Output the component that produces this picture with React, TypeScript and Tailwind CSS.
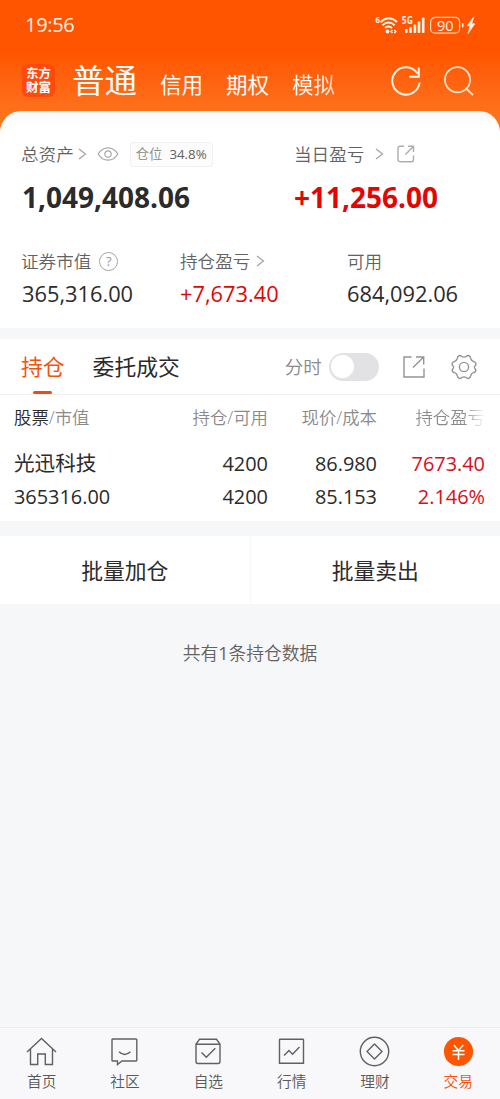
import React from "react";

type IconProps = { className?: string };

const Chevron = ({ className = "" }: IconProps) => (
  <svg viewBox="0 0 9 14" className={`h-[14px] w-[9px] shrink-0 ${className}`} fill="none" stroke="#a6a6a6" strokeWidth="1.3">
    <path d="M1 2l6.500 5L1 12" />
  </svg>
);

const Eye = ({ className = "" }: IconProps) => (
  <svg viewBox="0 0 22 16" className={`h-[16px] w-[22px] shrink-0 ${className}`} fill="none" stroke="#a6a6a6" strokeWidth="1.2">
    <path d="M1.200 8C3.500 4 7 1.800 11 1.800S18.500 4 20.800 8C18.500 12 15 14.200 11 14.200S3.500 12 1.200 8z" />
    <circle cx="11" cy="8" r="3.200" />
  </svg>
);

const ShareSmall = ({ className = "" }: IconProps) => (
  <svg viewBox="0 0 18 18" className={`h-[18px] w-[18px] shrink-0 ${className}`} fill="none" stroke="#adadad" strokeWidth="1.4">
    <path d="M7 1.200H3a2 2 0 0 0-2 2v11.500a2 2 0 0 0 2 2h11.500a2 2 0 0 0 2-2V10.500" />
    <path d="M11 1.200h5.500V7M16.300 1.400L8.500 9.500" />
  </svg>
);

const ShareLarge = ({ className = "" }: IconProps) => (
  <svg viewBox="0 0 24 24" className={`h-[24px] w-[24px] shrink-0 ${className}`} fill="none" stroke="#949494" strokeWidth="1.4">
    <path d="M9.500 2H2v20h20V13.500" />
    <path d="M14 2h7.700v7.500M21.500 2.200L11 12.500" />
  </svg>
);

const Gear = ({ className = "" }: IconProps) => (
  <svg viewBox="0 0 26 26" className={`h-[26px] w-[26px] shrink-0 ${className}`} fill="none" stroke="#949494" strokeWidth="1.4" strokeLinejoin="round">
    <path d="M8.600 1.500C10 1.200 10.800 3.100 13 3.100S16 1.200 17.400 1.500C19.500 2.200 19.600 3 20 5C20.500 7.200 22 7 24 8.200C25.300 9.300 25.200 10.500 24 12C22.900 13.200 22.900 13.300 24 14.500C25.200 16 25.300 16.800 24 17.900C22 19.100 20.500 18.900 20 21C19.600 23.100 19.500 23.900 17.400 24.500C16 24.800 15.200 22.900 13 22.900S10 24.800 8.600 24.500C6.500 23.900 6.400 23.100 6 21C5.500 18.900 4 19.100 2 17.900C.7 16.800 .8 16 2 14.500C3.100 13.300 3.100 13.200 2 12C.8 10.500 .7 9.300 2 8.200C4 7 5.500 7.200 6 5C6.400 3 6.500 2.200 8.600 1.500z" />
    <circle cx="13" cy="13" r="4.600" />
  </svg>
);

const StatusIcons = () => (
  <svg viewBox="0 0 102 22" className="h-[22px] w-[102px]" fill="none" stroke="#fff3e6">
    <text x="0.500" y="9" fontSize="9" fontWeight="700" fill="#fff3e6" stroke="none" fontFamily="Open Sans, sans-serif" textLength="4.500" lengthAdjust="spacingAndGlyphs">6</text>
    <g strokeWidth="1.900">
      <path d="M5.500 8.200Q13.500 .5 22 8" />
      <path d="M7.500 11.300Q13.500 5.800 19.700 11.200" />
      <path d="M9.800 14Q13.500 11 17 14" />
    </g>
    <circle cx="12.500" cy="17.500" r="1.900" fill="#fff3e6" stroke="none" />
    <path d="M17.500 16l-1.500 1.500 1.500 1.500M19.300 16l1.500 1.500-1.500 1.500" strokeWidth="1.500" />
    <text x="26.800" y="10" fontSize="10.500" fontWeight="700" fill="#fff3e6" stroke="none" fontFamily="Open Sans, sans-serif" textLength="11" lengthAdjust="spacingAndGlyphs">5G</text>
    <g fill="#fff3e6" stroke="none">
      <rect x="30" y="15" width="2.600" height="4" rx=".8" />
      <rect x="34.200" y="13" width="2.600" height="6" rx=".8" />
      <rect x="38.600" y="10.500" width="2.600" height="8.500" rx=".8" />
      <rect x="42.700" y="7.500" width="2.600" height="11.500" rx=".8" />
      <rect x="46.900" y="3.500" width="2.600" height="15.500" rx=".8" />
    </g>
    <rect x="55.600" y="3.400" width="29" height="15.800" rx="4.500" strokeWidth="1.200" stroke="#ffd9b8" />
    <path d="M87.700 9.300v4" strokeWidth="1.600" />
    <text x="70.300" y="16.600" fontSize="14.500" fontWeight="500" fill="#fff3e6" stroke="none" textAnchor="middle" fontFamily="Open Sans, sans-serif">90</text>
    <path d="M98.800 2.800L92 11.800h3L93 19.800 99.800 9.800h-3z" fill="#fff3e6" stroke="#fff3e6" strokeWidth="0.600" />
  </svg>
);

const navIcons: Record<string, React.ReactNode> = {
  首页: <path d="M1 16L15.500 2.500 30 16M4.500 13v15.500h7.200V18h7.600v10.500h7.200V13" />,
  社区: <path d="M4 3h23a.8.8 0 0 1 .8.800v20.400a.8.800 0 0 1-.8.800H13l-4.500 3.500V25H3.800a.8.800 0 0 1-.8-.8V3.800A.8.800 0 0 1 4 3zM10 15.800q5.500 5.400 11.500 0" />,
  自选: <path d="M3 8.200v17.300a2 2 0 0 0 2 2h20a2 2 0 0 0 2-2V8.200zM3 8.200L6.500 3.300h17L27 8.200M8.500 16.500l4.800 4.800 9-9" />,
  行情: <path d="M4 3.200h23a.5.500 0 0 1 .5.500v23.500h-24V3.700a.5.500 0 0 1 .5-.5zM8 19.500l5-5 3.500 3.700 7-7.200" />,
  理财: (
    <>
      <circle cx="15.500" cy="15.500" r="14.200" />
      <path d="M15.500 8L23 15.500 15.500 23 8 15.500z" strokeLinejoin="round" />
    </>
  ),
  交易: (
    <>
      <circle cx="15.500" cy="15.500" r="14.600" fill="#ff5500" stroke="none" />
      <path d="M10.800 9l4.700 5.500L20.200 9M9.500 14.700h12M9.500 18.500h12M15.500 14.500v9.300" stroke="#fff" strokeWidth="1.500" />
    </>
  ),
};

const rows = [
  ["光迅科技", "4200", "86.980", "7673.40"],
  ["365316.00", "4200", "85.153", "2.146%"],
];

const labelText = "text-[17.6px] font-[350] leading-6 text-[#626262]";

export default function App() {
  return (
    <div className="flex h-[1099px] w-[500px] flex-col overflow-hidden bg-[#f6f7f9] font-['Open_Sans','Noto_Sans_CJK_SC',sans-serif] text-[#2b2b2b] whitespace-nowrap">
      <header className="h-[136px] shrink-0 bg-linear-to-b from-[#ff5500] from-38% to-[#ff721c] to-85%">
        <div className="flex h-[50px] items-center justify-between pl-[25px] pr-[23px]">
          <span className="text-[20px] font-medium tracking-[-0.300px] text-[#fff3e6]">19:56</span>
          <StatusIcons />
        </div>
        <div className="flex h-[61px] items-center pl-[22px] text-[21.500px] leading-8 text-white">
          <div className="flex h-[33px] w-[33px] flex-col items-center justify-center rounded-[6px] bg-[#ff4a0d] text-[12.500px] font-bold leading-[14px]">
            <span>东方</span>
            <span>财富</span>
          </div>
          <h1 className="ml-[17px] text-[32.500px] leading-10">普通</h1>
          <span className="ml-[23px] mt-[9px]">信用</span>
          <span className="ml-[23px] mt-[9px]">期权</span>
          <span className="ml-[23px] mt-[9px] bg-linear-to-r from-white from-75% to-[#ffc7a3] bg-clip-text text-transparent">模拟</span>
          <svg viewBox="0 0 30 30" className="ml-[56px] h-[30px] w-[30px]" fill="none" stroke="#fff3e6" strokeWidth="2">
            <path d="M28.600 16.500A13.700 13.700 0 1 1 26.500 7.500M27.800 1.500v9.300h-9.500" />
          </svg>
          <svg viewBox="0 0 30 30" className="ml-[23px] h-[30px] w-[30px]" fill="none" stroke="#ffe4cc" strokeWidth="1.800">
            <circle cx="13.500" cy="13.700" r="12.600" />
            <path d="M21.500 22l7.500 7" />
          </svg>
        </div>
      </header>

      <section className="h-[217px] -mt-[25px] shrink-0 rounded-t-[21px] bg-linear-to-b from-[#f8f8f9] to-white to-[16px] pl-[22px] pt-[30px]">
        <div className="flex h-[26px] items-center">
          <div className="flex w-[272px] items-center">
            <span className={`${labelText} -ml-px`}>总资产</span>
            <Chevron className="ml-[4px]" />
            <Eye className="ml-[10px]" />
            <div className="ml-[11px] flex h-[25px] w-[83px] items-center rounded-[3px] border border-[#f1f1f1] bg-[#fcfcfc] pl-[5px] pt-px text-[13.300px] text-[#626262]">
              <span className="font-[350] text-[#8a8a8a]">仓位</span>
              <span className="ml-[7px]">34.8%</span>
            </div>
          </div>
          <span className={labelText}>当日盈亏</span>
          <Chevron className="ml-[11px]" />
          <ShareSmall className="ml-[13px]" />
        </div>
        <div className="mt-[12px] flex h-[36px] items-center text-[28px] font-bold leading-9">
          <span className="w-[272px]">1,049,408.06</span>
          <span className="text-[#e10602]">+11,256.00</span>
        </div>
        <div className="mt-[34px] flex h-[24px] items-center">
          <div className="flex w-[158px] items-center">
            <span className={`${labelText} -ml-px`}>证券市值</span>
            <span className="ml-[8px] flex h-[19px] w-[19px] items-center justify-center rounded-full border border-[#a6a6a6] text-[13px] leading-4 text-[#999]">?</span>
          </div>
          <div className="flex w-[167px] items-center">
            <span className={labelText}>持仓盈亏</span>
            <Chevron className="ml-[6px]" />
          </div>
          <span className={labelText}>可用</span>
        </div>
        <div className="mt-[6px] flex text-[21.800px] leading-[30px]">
          <span className="w-[158px]">365,316.00</span>
          <span className="w-[167px] text-[#e10602]">+7,673.40</span>
          <span>684,092.06</span>
        </div>
      </section>

      <section className="mt-[11px] h-[182px] shrink-0 bg-white">
        <div className="flex h-[56px] items-center border-b border-[#f0f0f0] pl-[21px] text-[21.800px] leading-8">
          <div className="relative pt-px text-[#f4510b]">
            持仓
            <span className="absolute -bottom-[11px] left-[12px] h-[3px] w-[19px] rounded-full bg-[#e9500f]" />
          </div>
          <span className="ml-[28px] pt-px">委托成交</span>
          <span className="ml-[105px] pt-px text-[18.500px] font-[350] text-[#8a8a8a]">分时</span>
          <span className="ml-[7px] flex h-[28px] w-[50px] items-center rounded-full bg-[#e2e2e4] pl-[2px]">
            <span className="h-[23px] w-[23px] rounded-full bg-white" />
          </span>
          <ShareLarge className="ml-[23px]" />
          <Gear className="ml-[25px]" />
        </div>
        <div className="flex h-[44px] items-center pl-[14px] text-[17.400px] font-[350] leading-6 text-[#8a8a8a]">
          <span className="w-[134px]">
            <span className="text-[#2b2b2b]">股票</span>/市值
          </span>
          <span className="w-[120px] text-right">持仓/可用</span>
          <span className="w-[109px] text-right">现价/成本</span>
          <span className="flex w-[108px] justify-end">
            <span className="bg-linear-to-r from-[#8a8a8a] from-70% to-[#f4f4f4] to-98% bg-clip-text text-transparent">持仓盈亏</span>
          </span>
        </div>
        <div className="mt-[8px]">
          {rows.map((row) => (
            <div key={row[0]} className="flex h-[33px] items-center pl-[14px] text-[19.900px] leading-[33px]">
              <span className="w-[134px]">{row[0] === "光迅科技" ? <span className="text-[20.600px]">{row[0]}</span> : row[0]}</span>
              <span className="w-[120px] text-right">{row[1]}</span>
              <span className="w-[109px] text-right">{row[2]}</span>
              <span className="w-[108px] text-right text-[#d90d1b]">{row[3]}</span>
            </div>
          ))}
        </div>
      </section>

      <section className="mt-[15px] flex h-[68px] shrink-0 bg-white text-[21.800px]">
        <button className="flex flex-1 items-center justify-center border-r border-[#f7f7f8] pt-[3px]">批量加仓</button>
        <button className="flex flex-1 items-center justify-center pt-[3px]">批量卖出</button>
      </section>

      <p className="mt-[37px] text-center text-[17.800px] font-[350] leading-6 text-[#626262]">
        共有<span className="font-normal">1</span>条持仓数据
      </p>

      <nav className="mt-auto flex h-[72px] shrink-0 border-t border-[#ececee] bg-[#f8f8fa]">
        {Object.entries(navIcons).map(([name, icon]) => (
          <div key={name} className={`flex flex-1 flex-col items-center pt-[8px] text-[14.700px] font-[350] leading-5 ${name === "交易" ? "text-[#f4510b]" : "text-[#585858]"}`}>
            <svg viewBox="0 0 31 31" className="h-[31px] w-[31px]" fill="none" stroke="#606060" strokeWidth="1.400">
              {icon}
            </svg>
            <span className="mt-[4px]">{name}</span>
          </div>
        ))}
      </nav>
    </div>
  );
}
